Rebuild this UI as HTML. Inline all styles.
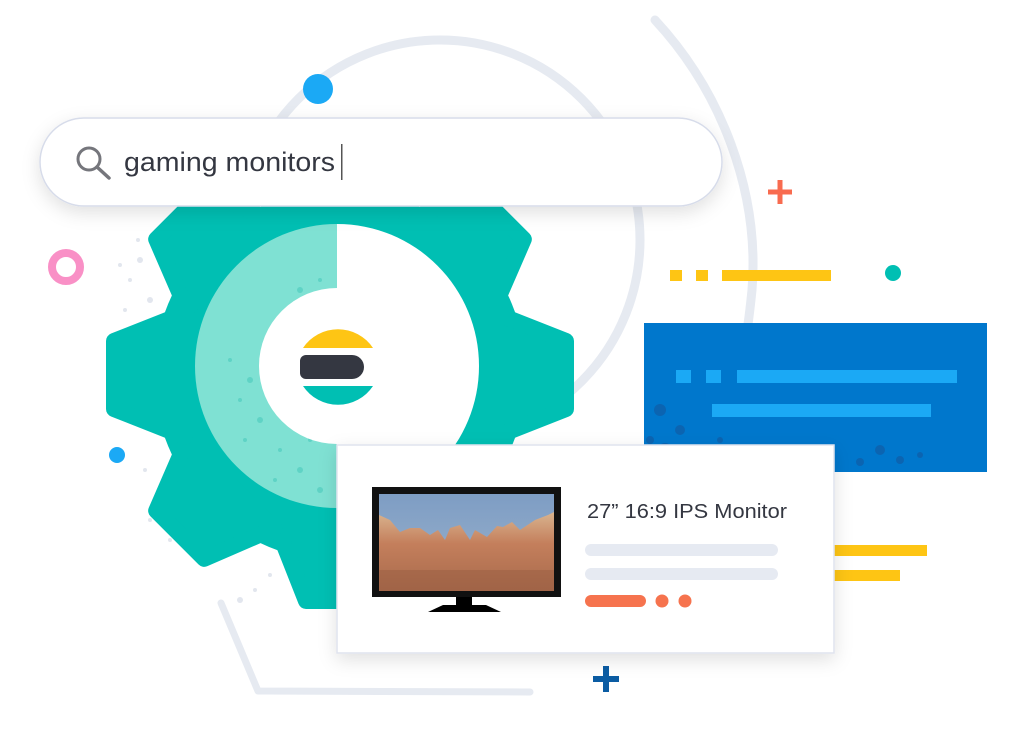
<!DOCTYPE html>
<html><head><meta charset="utf-8"><style>
html,body{margin:0;padding:0;background:#fff;width:1024px;height:738px;overflow:hidden}
svg{display:block}
</style></head><body>
<svg width="1024" height="738" viewBox="0 0 1024 738" xmlns="http://www.w3.org/2000/svg">
<defs>
<filter id="sh" x="-20%" y="-40%" width="140%" height="180%"><feDropShadow dx="0" dy="6" stdDeviation="9" flood-color="#000" flood-opacity="0.12"/></filter>
<linearGradient id="sky" x1="0" y1="0" x2="0" y2="1"><stop offset="0" stop-color="#7e9dc4"/><stop offset="1" stop-color="#9bb3cc"/></linearGradient>
<linearGradient id="rock" x1="0" y1="0" x2="0" y2="1"><stop offset="0" stop-color="#d9b48f"/><stop offset="0.4" stop-color="#c47f5c"/><stop offset="1" stop-color="#a86a4c"/></linearGradient>
<clipPath id="gc"><circle cx="337" cy="366" r="142"/></clipPath>
<path id="tooth" d="M-62,-155 L-34,-226 L34,-226 L62,-155 Z" fill="#00bfb3" stroke="#00bfb3" stroke-width="16" stroke-linejoin="round"/>
</defs>
<!-- arcs -->
<circle cx="440" cy="240" r="200" fill="none" stroke="#e6eaf1" stroke-width="9"/>
<path d="M655,20 C720,90 760,190 752,290 C748,330 745,345 740,360" fill="none" stroke="#e6eaf1" stroke-width="9" stroke-linecap="round"/>
<path d="M221,603 L258,691 L530,692" fill="none" stroke="#e6eaf1" stroke-width="7" stroke-linecap="round" stroke-linejoin="round"/>
<!-- speckles -->
<g fill="#e2e6ee">
<circle cx="140" cy="260" r="3"/><circle cx="130" cy="280" r="2"/><circle cx="150" cy="300" r="3"/><circle cx="125" cy="310" r="2"/><circle cx="138" cy="240" r="2"/><circle cx="120" cy="265" r="2"/><circle cx="145" cy="470" r="2"/><circle cx="160" cy="500" r="3"/><circle cx="150" cy="520" r="2"/><circle cx="170" cy="540" r="2"/><circle cx="240" cy="600" r="3"/><circle cx="270" cy="575" r="2"/><circle cx="255" cy="590" r="2"/>
</g>
<!-- gear -->
<g transform="translate(340,375)">
<circle r="186" fill="#00bfb3"/>
<use href="#tooth"/>
<use href="#tooth" transform="rotate(45)"/>
<use href="#tooth" transform="rotate(90)"/>
<use href="#tooth" transform="rotate(135)"/>
<use href="#tooth" transform="rotate(180)"/>
<use href="#tooth" transform="rotate(225)"/>
<use href="#tooth" transform="rotate(270)"/>
<use href="#tooth" transform="rotate(315)"/>
</g>
<path d="M337,224 A142,142 0 0 0 337,508 Z" fill="#7fe1d3"/>
<path d="M337,224 A142,142 0 0 1 337,508 Z" fill="#fff"/>
<g fill="#5fd3c5" clip-path="url(#gc)">
<circle cx="300" cy="290" r="3"/><circle cx="290" cy="310" r="2"/><circle cx="320" cy="280" r="2"/><circle cx="250" cy="380" r="3"/><circle cx="240" cy="400" r="2"/><circle cx="260" cy="420" r="3"/><circle cx="280" cy="450" r="2"/><circle cx="300" cy="470" r="3"/><circle cx="310" cy="440" r="2"/><circle cx="230" cy="360" r="2"/><circle cx="270" cy="340" r="2"/><circle cx="245" cy="440" r="2"/><circle cx="275" cy="480" r="2"/><circle cx="320" cy="490" r="3"/>
</g>
<circle cx="337" cy="366" r="78" fill="#fff"/>
<!-- elastic logo -->
<path d="M303,348 A42,42 0 0 1 373,348 Z" fill="#fec514"/>
<path d="M306,355 H352 A12,12 0 0 1 352,379 H306 A6,6 0 0 1 300,373 V361 A6,6 0 0 1 306,355Z" fill="#343741"/>
<path d="M303,386 H373 A42,42 0 0 1 303,386 Z" fill="#00bfb3"/>
<!-- decorations -->
<circle cx="318" cy="89" r="15" fill="#1ba9f5"/>
<circle cx="66" cy="267" r="14" fill="none" stroke="#f990c6" stroke-width="8"/>
<circle cx="117" cy="455" r="8" fill="#1ba9f5"/>
<path d="M780,180 V204 M768,192 H792" stroke="#f86b4f" stroke-width="5"/>
<path d="M606,666 V692 M593,679 H619" stroke="#0b5ca3" stroke-width="6"/>
<g fill="#fec514"><rect x="670" y="270" width="12" height="11"/><rect x="696" y="270" width="12" height="11"/><rect x="722" y="270" width="109" height="11"/><rect x="834" y="545" width="93" height="11"/><rect x="834" y="570" width="66" height="11"/></g>
<circle cx="893" cy="273" r="8" fill="#00bfb3"/>
<!-- blue panel -->
<rect x="644" y="323" width="343" height="149" fill="#0077cc"/>
<g fill="#0b64b1"><circle cx="660" cy="410" r="6"/><circle cx="680" cy="430" r="5"/><circle cx="665" cy="450" r="7"/><circle cx="700" cy="455" r="5"/><circle cx="650" cy="440" r="4"/><circle cx="720" cy="440" r="3"/><circle cx="880" cy="450" r="5"/><circle cx="900" cy="460" r="4"/><circle cx="920" cy="455" r="3"/><circle cx="860" cy="462" r="4"/></g>
<g fill="#1ba9f5"><rect x="676" y="370" width="15" height="13"/><rect x="706" y="370" width="15" height="13"/><rect x="737" y="370" width="220" height="13"/><rect x="712" y="404" width="219" height="13"/></g>
<!-- search bar -->
<rect x="40" y="118" width="682" height="88" rx="44" fill="#fff" stroke="#d7dcea" stroke-width="1.5" filter="url(#sh)"/>
<circle cx="89" cy="159" r="11" fill="none" stroke="#75767c" stroke-width="3"/>
<path d="M97,167 L109,178" stroke="#75767c" stroke-width="3.5" stroke-linecap="round"/>
<text x="124" y="171" font-family="Liberation Sans, sans-serif" font-size="27" fill="#343741" textLength="211" lengthAdjust="spacingAndGlyphs">gaming monitors</text>
<rect x="341" y="144" width="1.5" height="36" fill="#555"/>
<!-- card -->
<rect x="337" y="445" width="497" height="208" fill="#fff" stroke="#dfe3ee" stroke-width="1.5" filter="url(#sh)"/>
<rect x="372" y="487" width="189" height="110" fill="#111"/>
<rect x="379" y="494" width="175" height="97" fill="url(#sky)"/>
<path d="M379,515 L390,520 400,532 410,528 420,528 430,535 438,530 445,540 450,528 460,525 470,540 475,530 487,537 497,526 503,527 512,522 520,530 535,520 548,515 554,512 L554,591 L379,591Z" fill="url(#rock)"/>
<rect x="379" y="570" width="175" height="21" fill="#9a5e42" opacity="0.5"/>
<rect x="456" y="597" width="16" height="8" fill="#000"/>
<path d="M428,612 L443,605 H486 L501,612Z" fill="#000"/>
<text x="587" y="518" font-family="Liberation Sans, sans-serif" font-size="20" fill="#343741" textLength="200" lengthAdjust="spacingAndGlyphs">27” 16:9 IPS Monitor</text>
<rect x="585" y="544" width="193" height="12" rx="6" fill="#e6eaf2"/>
<rect x="585" y="568" width="193" height="12" rx="6" fill="#e6eaf2"/>
<rect x="585" y="595" width="61" height="12" rx="6" fill="#f6734e"/>
<circle cx="662" cy="601" r="6.5" fill="#f6734e"/>
<circle cx="685" cy="601" r="6.5" fill="#f6734e"/>
</svg>
</body></html>
